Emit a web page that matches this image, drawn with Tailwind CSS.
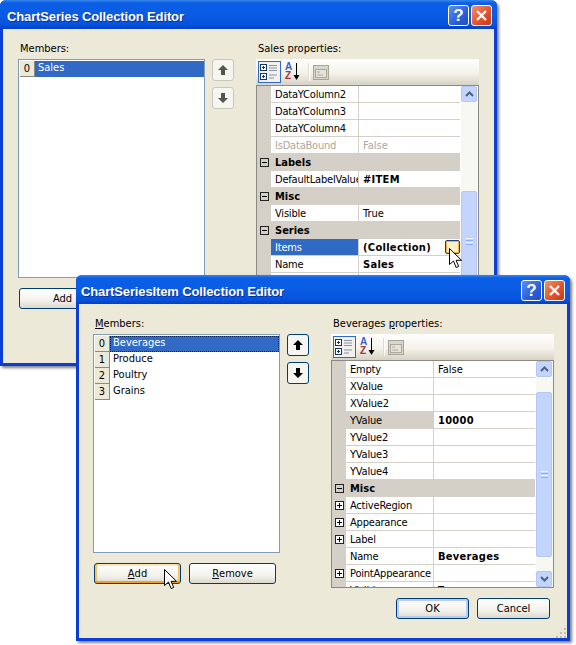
<!DOCTYPE html>
<html lang="en">
<head>
  <meta charset="UTF-8">
  <title>Collection Editors</title>
  <script src="https://cdn.jsdelivr.net/npm/@tailwindcss/browser@4"></script>
</head>
<body class="bg-white">
  <div id="stage" class="relative w-[576px] h-[645px] overflow-hidden bg-white font-['DejaVu_Sans',sans-serif] [font-stretch:condensed] text-[11px] leading-[13px] text-black"></div>

  <script>
    const plus = `<svg width="9" height="9" viewBox="0 0 9 9"><rect x=".5" y=".5" width="8" height="8" fill="#fff" stroke="#222"/><path d="M2 4.5h5M4.5 2v5" stroke="#000"/></svg>`;
    const minus = `<svg width="9" height="9" viewBox="0 0 9 9"><rect x=".5" y=".5" width="8" height="8" fill="none" stroke="#222"/><path d="M2 4.5h5" stroke="#000"/></svg>`;
    const chevUp = `<svg width="9" height="6" viewBox="0 0 9 6"><path d="M1 5l3.5-3.5L8 5" fill="none" stroke="#4d6185" stroke-width="2"/></svg>`;
    const chevDown = `<svg width="9" height="6" viewBox="0 0 9 6"><path d="M1 1l3.5 3.5L8 1" fill="none" stroke="#4d6185" stroke-width="2"/></svg>`;
    const cursor = `<svg width="13" height="21" viewBox="0 0 13 21"><path d="M.5.5v16l4-3.5 2.6 6.5 2.6-1-2.6-6.2h5.4z" fill="#fff" stroke="#000"/></svg>`;

    function arrow(up, color) {
      const d = up ? 'M6 1l5 5H8v5H4V6H1z' : 'M4 1h4v5h3l-5 5-5-5h3z';
      return `<svg width="12" height="12" viewBox="0 0 12 12"><path d="${d}" fill="${color}"/></svg>`;
    }

    function row(name, value, o = {}) {
      if (o.cat) {
        return `<div class="flex items-center h-[17px] bg-[#d4d0c8] font-bold"><div class="w-[14px] pl-[3px] flex items-center shrink-0">${minus}</div><div class="pl-[4px]">${name}</div></div>`;
      }
      const nameCls = o.sel === 'blue' ? 'bg-[#316ac5] text-white' : o.sel === 'gray' ? 'bg-[#d4d0c8]' : '';
      return `<div class="flex h-[17px]">
        <div class="w-[14px] pl-[3px] bg-[#d4d0c8] flex items-center shrink-0">${o.plus ? plus : ''}</div>
        <div class="flex flex-1 min-w-0 border-b border-[#d4d0c8] leading-[18px] ${o.off ? 'text-[#aca899]' : ''}">
          <div class="w-[88px] shrink-0 pl-[4px] tracking-[-0.2px] overflow-hidden whitespace-nowrap border-r border-[#d4d0c8] ${nameCls}">${name}</div>
          <div class="flex-1 pl-[4px] whitespace-nowrap ${o.bold ? 'font-bold tracking-[0.3px]' : ''}">${value || ''}</div>
        </div>
      </div>`;
    }

    function xpButton(label, cls, extra = '') {
      return `<div class="${cls} h-[21px] flex items-center justify-center rounded-[3px] border border-[#003c74] bg-[linear-gradient(180deg,#ffffff,#f3f2ec_60%,#dcd8ce)] ${extra}">${label}</div>`;
    }

    function titleBar(text, pad) {
      return `<div class="h-[29px] shrink-0 flex items-center justify-between ${pad} pr-[5px] pt-[2px] rounded-t-[6px] bg-[linear-gradient(180deg,#3c86ea_0%,#0a5fe6_10%,#0a5ce4_50%,#0653de_85%,#0341c0_100%)]">
        <span class="pt-[2px] font-['Liberation_Sans',sans-serif] text-[13px] font-bold text-white tracking-[-0.13px] [text-shadow:1px_1px_0_#0f2f8f]">${text}</span>
        <div class="flex gap-[2px]">
          <div class="w-[21px] h-[21px] rounded-[3px] border border-white flex items-center justify-center bg-[linear-gradient(135deg,#5f8df0,#2a5fd8_60%,#1f4fc0)] font-['Liberation_Sans',sans-serif] text-[17px] font-bold text-white">?</div>
          <div class="w-[21px] h-[21px] rounded-[3px] border border-white flex items-center justify-center bg-[linear-gradient(135deg,#f0906c,#e0502c_60%,#c63a18)]">
            <svg width="13" height="13" viewBox="0 0 13 13"><path d="M2 2l9 9M11 2l-9 9" stroke="#fff" stroke-width="2.4"/></svg>
          </div>
        </div>
      </div>`;
    }

    function toolbar() {
      return `<div class="h-[26px] flex items-center pl-[2px] bg-[linear-gradient(180deg,#ffffff,#f4f2ea_55%,#d6d2c4)]">
        <div class="w-[23px] h-[22px] border border-[#316ac5] bg-[#f1f0ea] flex items-center justify-center">
          <svg width="19" height="18" viewBox="0 0 19 18"><g fill="#fff" stroke="#16346e"><rect x=".5" y="1.5" width="6" height="6"/><rect x=".5" y="10.5" width="6" height="6"/></g><path d="M2 4.5h3M3.5 3v3M2 13.5h3M3.5 12v3" stroke="#16346e"/><path d="M9 2.5h8M9 5h8M9 7.500h8M9 12h8M9 15h5" stroke="#8a93a8"/></svg>
        </div>
        <div class="relative w-[17px] h-[22px] ml-[4px]">
          <span class="absolute left-0 top-[1px] font-['Liberation_Sans',sans-serif] text-[10px] leading-[10px] font-bold text-[#3a62c4]">A</span>
          <span class="absolute left-0 top-[10px] font-['Liberation_Sans',sans-serif] text-[10px] leading-[10px] font-bold text-[#a83040]">Z</span>
          <svg class="absolute left-[8px] top-[2px]" width="7" height="18" viewBox="0 0 7 18"><path d="M3.500 0v13" stroke="#000"/><path d="M.5 12h6l-3 5z" fill="#000"/></svg>
        </div>
        <div class="w-[2px] h-[18px] ml-[6px] bg-[#e0ddd0] border-r border-white"></div>
        <svg class="ml-[3px]" width="16" height="15" viewBox="0 0 16 15"><rect x=".5" y=".5" width="15" height="14" fill="#d8d5ca" stroke="#a8a598"/><rect x="2.500" y="4.500" width="11" height="8" fill="#e6e4da" stroke="#aca899"/><path d="M4 7h3M4 10h6" stroke="#aca899"/></svg>
      </div>`;
    }

    function grid(rows, o) {
      return `<div class="h-[228px] flex overflow-hidden border border-[#8c8a80] bg-white">
        <div class="flex-1 min-w-0">${rows.map(r => row(...r)).join('')}</div>
        <div class="w-[17px] shrink-0 ml-[1px] pr-[1px] flex flex-col bg-[#f8f8f2]">
          <div class="h-[16px] shrink-0 flex items-center justify-center rounded-[2px] border border-[#b4c8f6] bg-[#c3d5fd]">${chevUp}</div>
          <div class="${o.gapTop} shrink-0"></div>
          <div class="${o.thumb} shrink-0 flex flex-col items-center justify-center gap-[1px] rounded-[2px] border border-[#b4c8f6] bg-[#c3d5fd]">
            <div class="w-[7px] h-[1px] bg-[#eef4fe]"></div><div class="w-[7px] h-[1px] bg-[#8cb0f8]"></div><div class="w-[7px] h-[1px] bg-[#eef4fe]"></div><div class="w-[7px] h-[1px] bg-[#8cb0f8]"></div>
          </div>
          <div class="flex-1"></div>
          <div class="h-[16px] shrink-0 flex items-center justify-center rounded-[2px] border border-[#b4c8f6] bg-[#c3d5fd]">${chevDown}</div>
        </div>
      </div>`;
    }

    function listRow(i, text, sel, focus) {
      return `<div class="flex h-[16px] ml-[1px]">
        <div class="w-[15px] shrink-0 flex items-center justify-center pb-[1px] bg-[#ece9d8] border-r border-b border-[#8c8a80]">${i}</div>
        <div class="flex-1 ${sel ? 'bg-[#316ac5] text-white' : ''} ${focus ? 'border border-dotted border-[#0a2050] pl-[2px] leading-[11px]' : 'pl-[3px] leading-[13px]'}">${text}</div>
      </div>`;
    }

    function editorWindow(o) {
      const active = o.active;
      const arrowCls = active ? 'border-[#003c74] rounded-[3px]' : 'border-[#c9c7ba] rounded-[3px]';
      const arrowColor = active ? '#000' : '#55554f';
      return `<div class="absolute ${o.box} flex flex-col rounded-t-[6px] bg-[#0a3ed6] shadow-[2px_2px_3px_rgba(0,0,0,0.5)]">
        ${titleBar(o.title, o.titlePad)}
        <div class="relative flex-1 mx-[3px] mb-[3px] bg-[#ece9d8] ${o.pad} pt-[12px] flex">
          <div class="w-[187px] shrink-0">
            <div class="h-[13px] mb-[5px] pl-[2px] leading-[15px]">${active ? '<u>M</u>embers:' : 'Members:'}</div>
            <div class="h-[219px] pt-[1px] border border-[#7f9db9] bg-white">${o.items}</div>
            <div class="flex gap-[8px] mt-[10px] ml-[1px]">
              ${xpButton(active ? '<u>A</u>dd' : 'Add', 'w-[87px]', active ? 'shadow-[inset_0_-2px_0_#f0a020,inset_2px_0_0_#f8c460,inset_-2px_0_0_#f8c460,inset_0_2px_0_#fde4b0]' : '')}
              ${xpButton(active ? '<u>R</u>emove' : 'Remove', 'w-[87px]')}
            </div>
          </div>
          <div class="w-[22px] ml-[7px] mt-[18px] shrink-0 flex flex-col gap-[6px]">
            <div class="h-[22px] flex items-center justify-center border ${arrowCls} bg-[#f6f5ef]">${arrow(true, arrowColor)}</div>
            <div class="h-[22px] flex items-center justify-center border ${arrowCls} bg-[#f6f5ef]">${arrow(false, arrowColor)}</div>
          </div>
          <div class="w-[223px] ml-[22px] shrink-0">
            <div class="h-[13px] mb-[5px] pl-[2px] leading-[15px]">${o.label}</div>
            ${toolbar()}
            ${grid(o.rows, o)}
            <div class="flex justify-end gap-[8px] mt-[10px] pr-[4px]">
              ${xpButton('OK', 'w-[73px]', 'shadow-[inset_0_0_0_2px_#b8cdf0]')}
              ${xpButton('Cancel', 'w-[73px]')}
            </div>
          </div>
          ${o.grip ? `<svg class="absolute right-0 bottom-0" width="11" height="11" viewBox="0 0 11 11"><path d="M8 1h2v2H8zM4 5h2v2H4zM8 5h2v2H8zM0 9h2v2H0zM4 9h2v2H4zM8 9h2v2H8z" fill="#c4c0b0"/></svg>` : ''}
        </div>
      </div>`;
    }

    const back = editorWindow({
      box: 'left-0 top-0 w-[497px] h-[366px]',
      pad: 'pl-[15px]',
      titlePad: 'pl-[7px]',
      title: 'ChartSeries Collection Editor',
      label: 'Sales properties:',
      gapTop: 'h-[89px]',
      thumb: 'h-[100px]',
      items: listRow('0', 'Sales', true),
      rows: [
        ['DataYColumn2'], ['DataYColumn3'], ['DataYColumn4'],
        ['IsDataBound', 'False', { off: true }],
        ['Labels', '', { cat: true }],
        ['DefaultLabelValue', '#ITEM', { bold: true }],
        ['Misc', '', { cat: true }],
        ['Visible', 'True'],
        ['Series', '', { cat: true }],
        ['Items', '(Collection)', { bold: true, sel: 'blue' }],
        ['Name', 'Sales', { bold: true }],
        ['']
      ]
    });

    const front = editorWindow({
      box: 'left-[76px] top-[275px] w-[494px] h-[366px]',
      pad: 'pl-[14px]',
      titlePad: 'pl-[5px]',
      active: true,
      grip: true,
      title: 'ChartSeriesItem Collection Editor',
      label: 'Beverages <u>p</u>roperties:',
      gapTop: 'h-[15px]',
      thumb: 'h-[165px]',
      items: listRow('0', 'Beverages', true, true) + listRow('1', 'Produce') + listRow('2', 'Poultry') + listRow('3', 'Grains'),
      rows: [
        ['Empty', 'False'], ['XValue'], ['XValue2'],
        ['YValue', '10000', { bold: true, sel: 'gray' }],
        ['YValue2'], ['YValue3'], ['YValue4'],
        ['Misc', '', { cat: true }],
        ['ActiveRegion', '', { plus: true }],
        ['Appearance', '', { plus: true }],
        ['Label', '', { plus: true }],
        ['Name', 'Beverages', { bold: true }],
        ['PointAppearance', '', { plus: true }],
        ['Visible', 'True']
      ]
    });

    const overlays = `
      <div class="absolute left-[445px] top-[240px] w-[15px] h-[14px] rounded-[2px] border border-[#1c3f78] bg-[#fdf0c8] shadow-[inset_0_0_0_1px_#f2b440]"></div>
      <div class="absolute left-[449px] top-[248px]">${cursor}</div>
      <div class="absolute left-[164px] top-[569px]">${cursor}</div>`;

    document.getElementById('stage').innerHTML = back + front + overlays;
  </script>
</body>
</html>
